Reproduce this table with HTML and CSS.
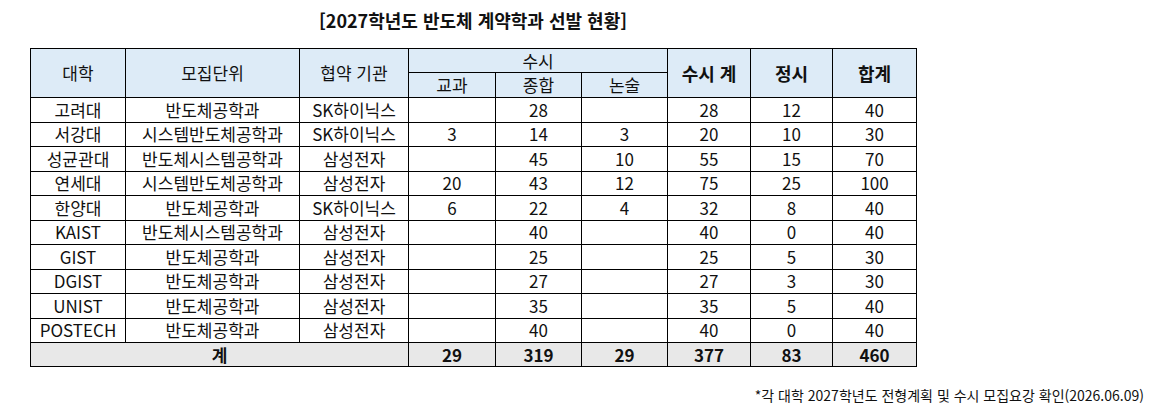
FILE: index.html
```html
<!DOCTYPE html>
<html lang="ko">
<head>
<meta charset="utf-8">
<link rel="stylesheet" href="styles.css">
</head>
<body>
<div class="wrap">
  <h1 class="title">[2027학년도 반도체 계약학과 선발 현황]</h1>
  <table class="grid">
    <colgroup>
      <col class="c1"><col class="c2"><col class="c3"><col class="c4"><col class="c5"><col class="c6"><col class="c7"><col class="c8"><col class="c9">
    </colgroup>
    <thead>
      <tr class="h1">
        <th rowspan="2">대학</th>
        <th rowspan="2">모집단위</th>
        <th rowspan="2">협약 기관</th>
        <th colspan="3">수시</th>
        <th rowspan="2" class="b">수시 계</th>
        <th rowspan="2" class="b">정시</th>
        <th rowspan="2" class="b">합계</th>
      </tr>
      <tr class="h2">
        <th>교과</th><th>종합</th><th>논술</th>
      </tr>
    </thead>
    <tbody>
      <tr><td>고려대</td><td>반도체공학과</td><td>SK하이닉스</td><td></td><td>28</td><td></td><td>28</td><td>12</td><td>40</td></tr>
      <tr><td>서강대</td><td>시스템반도체공학과</td><td>SK하이닉스</td><td>3</td><td>14</td><td>3</td><td>20</td><td>10</td><td>30</td></tr>
      <tr><td>성균관대</td><td>반도체시스템공학과</td><td>삼성전자</td><td></td><td>45</td><td>10</td><td>55</td><td>15</td><td>70</td></tr>
      <tr><td>연세대</td><td>시스템반도체공학과</td><td>삼성전자</td><td>20</td><td>43</td><td>12</td><td>75</td><td>25</td><td>100</td></tr>
      <tr><td>한양대</td><td>반도체공학과</td><td>SK하이닉스</td><td>6</td><td>22</td><td>4</td><td>32</td><td>8</td><td>40</td></tr>
      <tr><td>KAIST</td><td>반도체시스템공학과</td><td>삼성전자</td><td></td><td>40</td><td></td><td>40</td><td>0</td><td>40</td></tr>
      <tr><td>GIST</td><td>반도체공학과</td><td>삼성전자</td><td></td><td>25</td><td></td><td>25</td><td>5</td><td>30</td></tr>
      <tr><td>DGIST</td><td>반도체공학과</td><td>삼성전자</td><td></td><td>27</td><td></td><td>27</td><td>3</td><td>30</td></tr>
      <tr><td>UNIST</td><td>반도체공학과</td><td>삼성전자</td><td></td><td>35</td><td></td><td>35</td><td>5</td><td>40</td></tr>
      <tr><td>POSTECH</td><td>반도체공학과</td><td>삼성전자</td><td></td><td>40</td><td></td><td>40</td><td>0</td><td>40</td></tr>
    </tbody>
    <tfoot>
      <tr><td colspan="3">계</td><td>29</td><td>319</td><td>29</td><td>377</td><td>83</td><td>460</td></tr>
    </tfoot>
  </table>
</div>
<p class="note">*각 대학 2027학년도 전형계획 및 수시 모집요강 확인(2026.06.09)</p>
</body>
</html>
```

FILE: styles.css
```css
html, body {
  margin: 0;
  padding: 0;
  background: #fff;
}
body {
  font-family: "Noto Sans CJK KR", "Noto Sans", sans-serif;
  color: #111;
}
.wrap {
  width: 886px;
  margin-left: 30px;
}
.title {
  margin: 0;
  height: 48px;
  padding-top: 7px;
  box-sizing: border-box;
  font-size: 18px;
  line-height: 26px;
  font-weight: 700;
  text-align: center;
}
.grid {
  width: 886px;
  table-layout: fixed;
  border-collapse: collapse;
  font-size: 17px;
}
.c1 { width: 95px; }
.c2 { width: 174px; }
.c3 { width: 109px; }
.c4 { width: 87px; }
.c5 { width: 86px; }
.c6 { width: 86px; }
.c7 { width: 83px; }
.c8 { width: 82px; }
.c9 { width: 84px; }
.grid th, .grid td {
  border: 1px solid #000;
  padding: 0;
  text-align: center;
  vertical-align: middle;
  line-height: 20px;
  white-space: nowrap;
}
.grid th {
  background: #ddebf7;
  font-weight: 400;
}
.grid th.b {
  font-weight: 700;
  font-size: 18px;
}
.h1 { height: 24px; }
.h2 { height: 25px; }
.grid tbody tr { height: 24.5px; }
.grid tfoot td {
  background: #e8e8e8;
  font-weight: 700;
  height: 23px;
}
.note {
  margin: 19px 0 0 0;
  padding-right: 20px;
  text-align: right;
  font-size: 14px;
  line-height: 18px;
}
```
